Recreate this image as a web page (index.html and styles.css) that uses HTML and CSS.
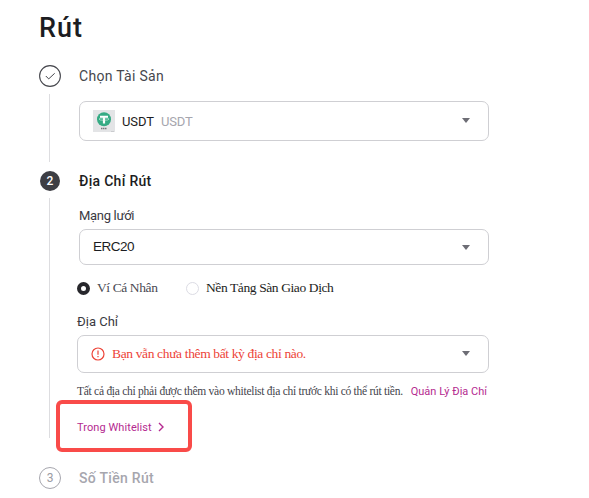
FILE: index.html
```
<!DOCTYPE html>
<html lang="vi">
<head>
    <meta charset="UTF-8">
    <meta name="viewport" content="width=device-width, initial-scale=1.0">
    <title>Rút</title>
    <link rel="stylesheet" href="styles.css">
</head>
<body>
    <div class="container">
        <h1>Rút</h1>

        <!-- Step 1 -->
        <div class="step step-asset">
            <div class="rail">
                <svg class="step-check" width="22" height="22" viewBox="0 0 22 22" fill="none" stroke="#46474d">
                    <circle cx="11" cy="11" r="10.4" stroke-width="1.1"/>
                    <path d="M6.8 11l2.9 2.9 6-5.6" stroke-width="1"/>
                </svg>
                <span class="line"></span>
            </div>
            <div class="content">
                <h2 class="done">Chọn Tài Sản</h2>
                <div class="select select-asset">
                    <svg class="coin" width="22" height="22" viewBox="0 0 22 22">
                        <rect width="22" height="22" fill="#e3e4e6"/>
                        <circle cx="11" cy="9.3" r="7" fill="#35ab84"/>
                        <path d="M7 5.7h8v2.1h-2.9v5.8H9.9V7.8H7z" fill="#fff"/>
                        <ellipse cx="11" cy="9.1" rx="5" ry="1.2" fill="none" stroke="#dff3ec" stroke-width=".6"/>
                        <path d="M8 18.5h6" stroke="#77797c" stroke-width="1.3" stroke-dasharray="1.5 .5"/>
                        <path d="M18 21.5h3" stroke="#b9bbbd" stroke-width=".6"/>
                    </svg>
                    <span class="symbol">USDT</span>
                    <span class="name">USDT</span>
                    <span class="arrow"></span>
                </div>
            </div>
        </div>

        <!-- Step 2 -->
        <div class="step step-address">
            <div class="rail">
                <span class="number active">2</span>
                <span class="line"></span>
            </div>
            <div class="content">
                <h2>Địa Chỉ Rút</h2>
                <div class="label label-network">Mạng lưới</div>
                <div class="select select-network">
                    <span class="network">ERC20</span>
                    <span class="arrow"></span>
                </div>
                <div class="radios">
                    <span class="radio checked"></span>
                    <span class="radio-text wallet">Ví Cá Nhân</span>
                    <span class="radio"></span>
                    <span class="radio-text exchange">Nền Tảng Sàn Giao Dịch</span>
                </div>
                <div class="address">
                    <div class="label">Địa Chỉ</div>
                    <div class="select select-address">
                        <svg class="warning" width="14" height="14" viewBox="0 0 14 14" fill="none" stroke="#ed4337">
                            <circle cx="7" cy="7" r="6" stroke-width="1.2"/>
                            <path d="M7 3.6v4.2M7 9v1.3" stroke-width="1.2"/>
                        </svg>
                        <span class="error">Bạn vẫn chưa thêm bất kỳ địa chỉ nào.</span>
                        <span class="arrow"></span>
                    </div>
                    <div class="note">
                        <span class="note-text">Tất cả địa chỉ phải được thêm vào whitelist địa chỉ trước khi có thể rút tiền.</span>
                        <a class="manage" href="#">Quản Lý Địa Chỉ</a>
                    </div>
                    <a class="whitelist" href="#">
                        <span>Trong Whitelist</span>
                        <svg width="6" height="10" viewBox="0 0 6 10" fill="none" stroke="#b52a90" stroke-width="1.4">
                            <path d="M1 1l4 4-4 4"/>
                        </svg>
                    </a>
                </div>
            </div>
        </div>

        <!-- Step 3 -->
        <div class="step step-amount">
            <div class="rail">
                <span class="number pending">3</span>
            </div>
            <div class="content">
                <h2 class="pending-title">Số Tiền Rút</h2>
            </div>
        </div>
    </div>
</body>
</html>
```
FILE: styles.css
```
* {
    box-sizing: border-box;
}
body {
    margin: 0;
    height: 498px;
    overflow: hidden;
    background-color: #fff;
    color: #1c1d22;
    font-family: Roboto, "Noto Sans", sans-serif;
}
a {
    color: #b52a90;
    text-decoration: none;
}
.container {
    width: 489px;
    padding: 10px 0 0 39px;
}
h1 {
    margin: 0 0 19px;
    height: 36px;
    line-height: 36px;
    font-size: 27px;
    font-weight: 500;
    letter-spacing: 1px;
}
h2 {
    margin: 0;
    height: 22px;
    line-height: 22px;
    font-size: 14px;
    font-weight: 500;
    letter-spacing: 0.3px;
}
h2.done {
    color: #46474d;
    font-weight: 400;
}
h2.pending-title {
    color: #a6a6ae;
}
.step {
    display: flex;
    gap: 18px;
}
.step-asset {
    height: 105px;
}
.step-address {
    height: 297px;
}

/* Left rail with step numbers */
.rail {
    width: 22px;
    display: flex;
    flex-direction: column;
    align-items: center;
    flex-shrink: 0;
}
.line {
    width: 1px;
    flex: 1;
    margin: 7px 1px 8px 0;
    background-color: #dddde0;
}
.step-address .line {
    margin-bottom: 29px;
}
.number {
    width: 22px;
    height: 22px;
    border-radius: 50%;
    font-size: 12px;
    line-height: 20px;
    text-align: center;
}
.active {
    width: 20px;
    height: 20px;
    margin-top: 1px;
    background-color: #3d3e44;
    color: #fff;
    font-weight: 500;
}
.pending {
    border: 1px solid #a6a6ae;
    color: #9b9ba3;
}
.content {
    width: 410px;
}

/* Selects */
.select {
    display: flex;
    align-items: center;
    border: 1px solid #cfcfd3;
    border-radius: 7px;
    font-size: 13px;
}
.select-asset {
    height: 40px;
    margin-top: 14px;
    padding-left: 13px;
}
.symbol {
    margin: 0 7px;
    width: 32px;
    letter-spacing: -0.1px;
}
.name {
    color: #a6a6ae;
    letter-spacing: -0.2px;
}
.arrow {
    margin: 0 18px 1px auto;
    border: 4px solid transparent;
    border-top: 5px solid #6d6d75;
    border-bottom: 0;
}
.label {
    height: 18px;
    line-height: 18px;
    font-size: 13px;
    color: #3a3a42;
}
.label-network {
    margin-top: 15px;
    letter-spacing: -0.3px;
}
.select-network {
    height: 36px;
    margin-top: 4px;
    padding-left: 13px;
}
.network {
    margin-bottom: 1px;
    font-family: "Liberation Sans", Arial, sans-serif;
    font-size: 13.5px;
    letter-spacing: -0.5px;
}
.select-network .arrow {
    margin-bottom: 0;
}

/* Radios */
.radios {
    display: flex;
    align-items: center;
    height: 18px;
    margin: 14px 0 0 -2px;
    font-family: "Liberation Serif", "Times New Roman", serif;
    font-size: 13.5px;
}
.radio {
    width: 13px;
    height: 13px;
    border: 1px solid #dcdce4;
    border-radius: 50%;
}
.checked {
    border: 4px solid #27272c;
}
.radio-text {
    margin-left: 7px;
    letter-spacing: -0.4px;
    white-space: nowrap;
}
.wallet {
    width: 89px;
    color: #4a4a52;
}

.address {
    margin: 16px 0 0 -2px;
}
.select-address {
    height: 38px;
    margin-top: 4px;
    padding-left: 13px;
}
.error {
    margin-left: 7px;
    color: #ed4337;
    font-family: "Liberation Serif", "Times New Roman", serif;
    font-size: 13.5px;
    letter-spacing: -0.36px;
    white-space: nowrap;
}
.note {
    display: flex;
    align-items: center;
    justify-content: space-between;
    height: 18px;
    margin-top: 9px;
    padding-right: 2px;
    white-space: nowrap;
    font-size: 11px;
}
.note-text {
    color: #44444c;
    font-family: "Liberation Serif", "Times New Roman", serif;
    font-size: 11.5px;
    letter-spacing: -0.27px;
}
.whitelist {
    position: relative;
    display: flex;
    align-items: center;
    gap: 6px;
    width: 94px;
    height: 18px;
    margin-top: 18px;
    font-size: 11px;
    letter-spacing: 0.08px;
}
/* Red highlight frame around the link */
.whitelist::after {
    content: "";
    position: absolute;
    left: -21px;
    top: -18px;
    width: 128px;
    height: 44px;
    border: 4px solid #f94b49;
    border-radius: 6px;
}
```
